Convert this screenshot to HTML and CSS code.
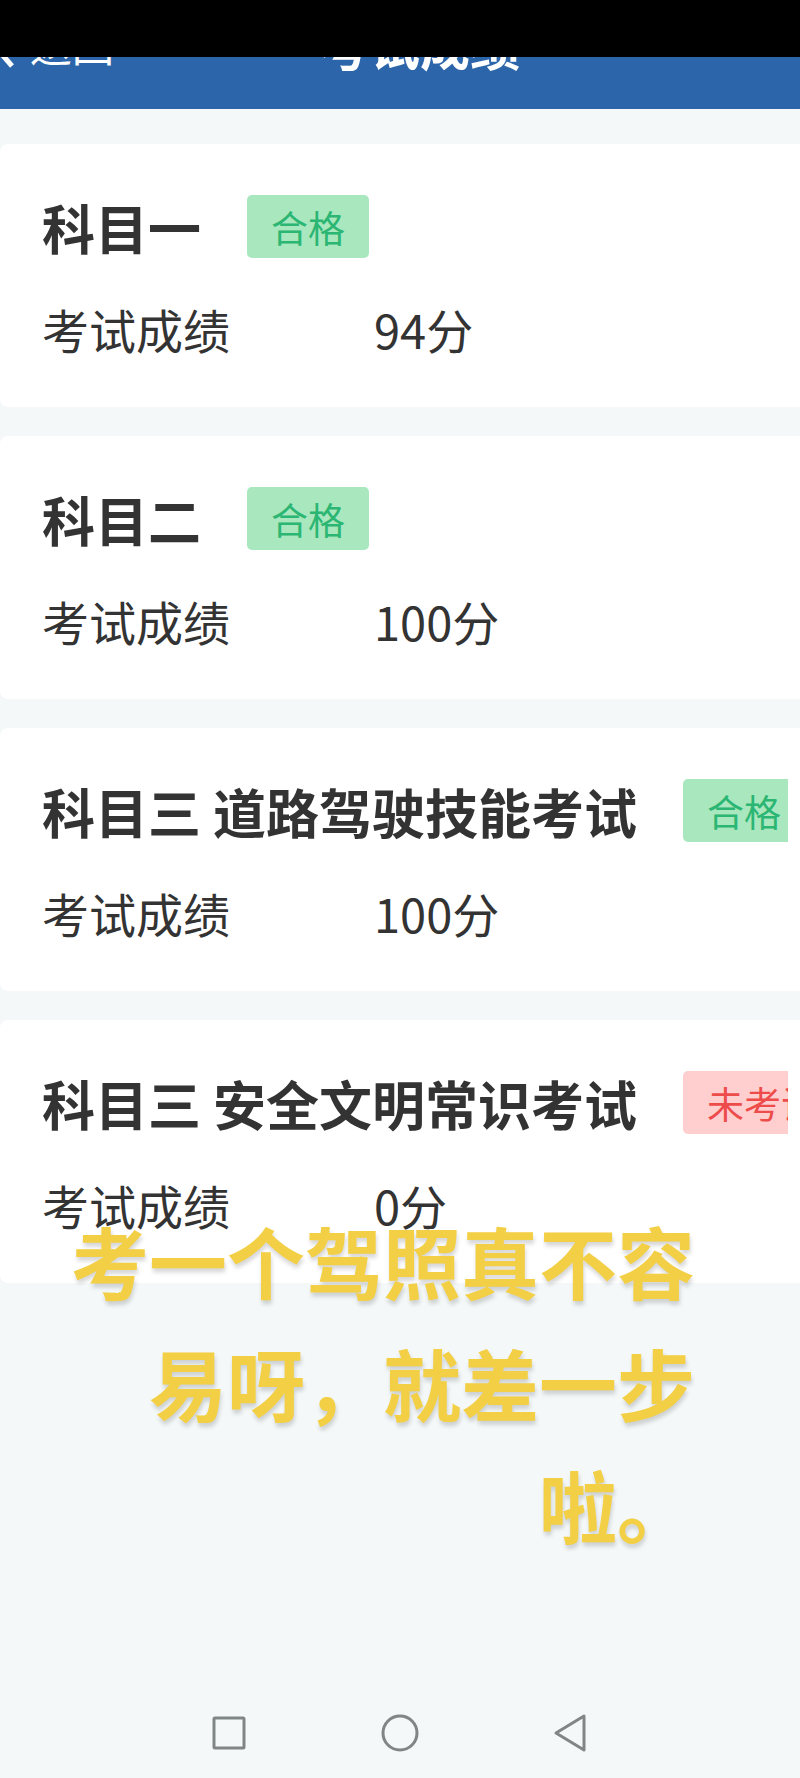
FILE: index.html
```html
<!DOCTYPE html>
<html lang="zh-CN">
<head>
    <meta charset="UTF-8">
    <meta name="viewport" content="width=device-width, initial-scale=1.0">
    <title>考试成绩</title>
    <link rel="stylesheet" href="styles.css">
</head>
<body>

<div class="status-bar"></div>

<header class="header">
    <a href="#" class="back">
        <svg class="back-icon" viewBox="0 0 24 48" aria-hidden="true"><path d="M22 2 L3 24 L22 46"/></svg>
        <span>返回</span>
    </a>
    <h1>考试成绩</h1>
</header>

<main class="results">
    <section class="card">
        <div class="card-title">
            <h2>科目一</h2>
            <span class="badge pass">合格</span>
        </div>
        <dl class="score">
            <dt>考试成绩</dt>
            <dd>94分</dd>
        </dl>
    </section>
    <section class="card">
        <div class="card-title">
            <h2>科目二</h2>
            <span class="badge pass">合格</span>
        </div>
        <dl class="score">
            <dt>考试成绩</dt>
            <dd>100分</dd>
        </dl>
    </section>
    <section class="card">
        <div class="card-title">
            <h2>科目三 道路驾驶技能考试</h2>
            <span class="badge pass">合格</span>
        </div>
        <dl class="score">
            <dt>考试成绩</dt>
            <dd>100分</dd>
        </dl>
    </section>
    <section class="card">
        <div class="card-title">
            <h2>科目三 安全文明常识考试</h2>
            <span class="badge pending">未考试</span>
        </div>
        <dl class="score">
            <dt>考试成绩</dt>
            <dd>0分</dd>
        </dl>
    </section>
    <p class="caption">考一个驾照真不容<br>易呀，就差一步<br>啦。</p>
</main>

<nav class="system-nav">
    <button type="button" aria-label="最近任务">
        <svg viewBox="0 0 40 40"><rect x="5" y="5" width="30" height="30" rx="1"/></svg>
    </button>
    <button type="button" aria-label="主页">
        <svg viewBox="0 0 40 40"><circle cx="20" cy="20" r="17"/></svg>
    </button>
    <button type="button" aria-label="返回">
        <svg viewBox="0 0 40 40"><path d="M5 20 L33 3 V37 Z"/></svg>
    </button>
</nav>

</body>
</html>
```

FILE: styles.css
```css
* {
    box-sizing: border-box;
}
body {
    margin: 0;
    min-height: 100vh;
    display: flex;
    flex-direction: column;
    position: relative;
    overflow-x: hidden;
    background-color: #f4f8f9;
    color: #333;
    font-family: "Noto Sans CJK SC", sans-serif;
}
h1, h2, p, dl, dd {
    margin: 0;
}

/* Covers the top of the header */
.status-bar {
    position: absolute;
    top: 0;
    left: 0;
    width: 100%;
    height: 57px;
    background-color: #000;
    z-index: 10;
}
.header {
    display: grid;
    grid-template-columns: 1fr auto 1fr;
    align-items: center;
    height: 109px;
    padding: 0 0 22px 40px;
    background-color: #2c65aa;
    color: #fff;
    overflow: hidden;
}
.header h1 {
    font-size: 50px;
    line-height: 72px;
}
.back {
    display: flex;
    align-items: center;
    gap: 16px;
    margin-left: -50px; /* the arrow runs off the left edge */
    color: #fff;
    font-size: 42px;
    line-height: 64px;
    text-decoration: none;
}
.back-icon {
    width: 24px;
    height: 48px;
    fill: none;
    stroke: #fff;
    stroke-width: 5;
}

.results {
    position: relative;
    display: flex;
    flex-direction: column;
    gap: 29px;
    padding-top: 35px;
}
.card {
    padding: 51px 12px 43px 42px;
    background-color: #fff;
    border-radius: 8px 0 0 8px;
}
.card-title {
    display: flex;
    align-items: center;
    gap: 46px;
    overflow-x: clip;
    white-space: nowrap;
}
.card-title h2 {
    flex: none;
    padding-top: 2px;
    font-size: 53px;
    line-height: 61px;
}
.badge {
    flex: none;
    padding: 1px 24px 0;
    border-radius: 5px;
    font-size: 37px;
    line-height: 62px;
}
.pass {
    background-color: #a9e7be;
    color: #2bb673;
}
.pending {
    background-color: #ffcfcf;
    color: #ee4b4b;
}
.score {
    display: flex;
    margin-top: 36px;
    font-size: 47px;
    line-height: 70px;
}
.score dt {
    flex: 0 0 332px;
}

/* Caption laid over the last card */
.caption {
    position: absolute;
    top: 1090px;
    right: 105px;
    color: #f3cf45;
    font-size: 78px;
    font-weight: bold;
    line-height: 122px;
    text-align: right;
    white-space: nowrap;
    text-shadow: 1px 4px 4px rgba(0, 0, 0, 0.16);
}

.system-nav {
    display: grid;
    grid-template-columns: repeat(3, 1fr);
    justify-items: center;
    margin-top: auto;
    padding: 0 18% 21px;
}
.system-nav button {
    display: flex;
    padding: 4px;
    border: 0;
    background: none;
}
.system-nav svg {
    width: 40px;
    height: 40px;
    fill: none;
    stroke: #808585;
    stroke-width: 3;
    stroke-linejoin: round;
}
```
